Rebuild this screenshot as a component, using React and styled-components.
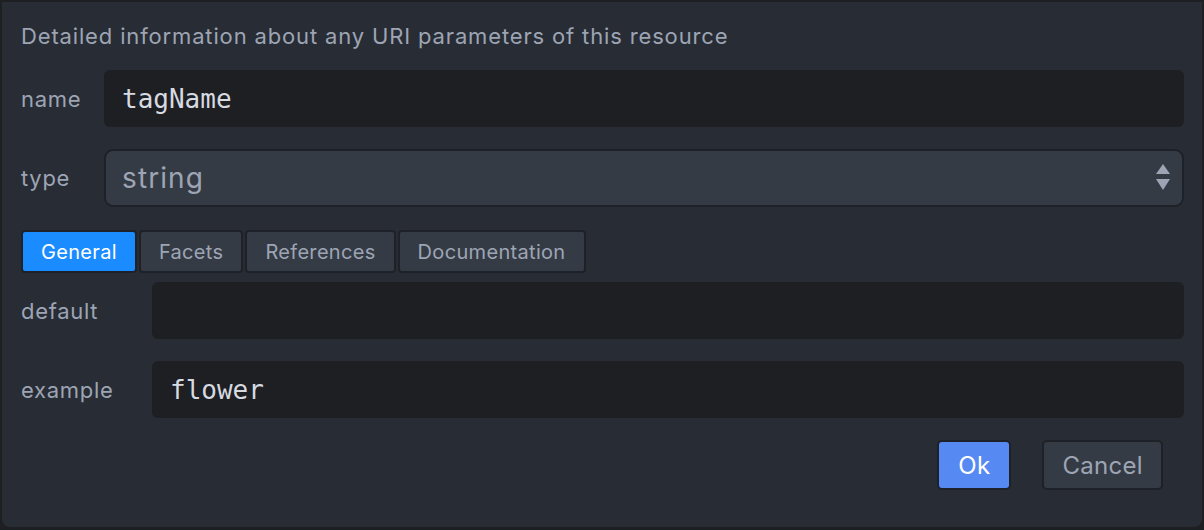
import styled, { createGlobalStyle } from "styled-components";

const GlobalStyle = createGlobalStyle`
  html, body {
    margin: 0;
    padding: 0;
    background: #1d1f23;
  }
  body {
    font-family: Inter, "Noto Sans", sans-serif;
    -webkit-font-smoothing: antialiased;
  }
`;

const Page = styled.div`
  width: 1204px;
  height: 530px;
  padding: 2px 2px 3px 2px;
  box-sizing: border-box;
  overflow: hidden;
`;

const Panel = styled.div`
  height: 100%;
  box-sizing: border-box;
  background: #282c34;
  border-radius: 0 0 8px 8px;
  padding: 19px 18px 0 19px;
  display: flex;
  flex-direction: column;
`;

const Description = styled.div`
  font-size: 22px;
  line-height: 30px;
  letter-spacing: 0.85px;
  color: #9da5b4;
  margin-bottom: 19px;
`;

const Row = styled.div`
  display: grid;
  grid-template-columns: ${(p) => p.$label}px 1fr;
  align-items: center;
  margin-bottom: ${(p) => p.$gap || 0}px;
`;

const Label = styled.div`
  font-size: 22px;
  letter-spacing: 0.7px;
  color: #9da5b4;
`;

const TextInput = styled.div`
  height: 57px;
  box-sizing: border-box;
  background: #1d1f23;
  border-radius: 6px;
  padding: 0 18px;
  display: flex;
  align-items: center;
  font-family: "DejaVu Sans Mono", monospace;
  font-size: 26px;
  color: #d7dae0;
`;

const Select = styled.div`
  height: 58px;
  box-sizing: border-box;
  background: #353b45;
  border: 2px solid #1e2127;
  border-radius: 9px;
  padding: 0 12px 0 16px;
  display: flex;
  align-items: center;
  justify-content: space-between;
  font-size: 28px;
  letter-spacing: 1.1px;
  color: #9da5b4;
`;

const Tabs = styled.div`
  display: flex;
  gap: 2px;
  margin-bottom: 9px;
`;

const Tab = styled.div`
  height: 43px;
  box-sizing: border-box;
  padding: 0 18px;
  display: flex;
  align-items: center;
  font-size: 20px;
  letter-spacing: 0.32px;
  border-radius: 4px;
  border: 2px solid #1e2127;
  background: ${(p) => (p.$active ? "#1a8cff" : "#353b45")};
  color: ${(p) => (p.$active ? "#ffffff" : "#9da5b4")};
`;

const Actions = styled.div`
  display: flex;
  justify-content: flex-end;
  gap: 31px;
  padding-right: 21px;
`;

const Button = styled.div`
  height: 50px;
  box-sizing: border-box;
  padding: 0 ${(p) => (p.$primary ? 19 : 18)}px;
  display: flex;
  align-items: center;
  font-size: 24px;
  letter-spacing: 0.3px;
  border-radius: 5px;
  border: 2px solid #1e2127;
  background: ${(p) => (p.$primary ? "#568af2" : "#353b45")};
  color: ${(p) => (p.$primary ? "#ffffff" : "#9da5b4")};
`;

const Arrows = () => (
  <svg width="14" height="28" viewBox="0 0 14 28">
    <path d="M7 0 L14 10 L0 10 Z" fill="#9da5b4" />
    <path d="M0 15 L14 15 L7 26 Z" fill="#9da5b4" />
  </svg>
);

export default function App() {
  return (
    <>
      <GlobalStyle />
      <Page>
        <Panel>
          <Description>Detailed information about any URI parameters of this resource</Description>
          <Row $label={83} $gap={22}>
            <Label>name</Label>
            <TextInput>tagName</TextInput>
          </Row>
          <Row $label={83} $gap={23}>
            <Label>type</Label>
            <Select>
              <span>string</span>
              <Arrows />
            </Select>
          </Row>
          <Tabs>
            <Tab $active>General</Tab>
            <Tab>Facets</Tab>
            <Tab>References</Tab>
            <Tab>Documentation</Tab>
          </Tabs>
          <Row $label={131} $gap={22}>
            <Label>default</Label>
            <TextInput />
          </Row>
          <Row $label={131} $gap={22}>
            <Label>example</Label>
            <TextInput>flower</TextInput>
          </Row>
          <Actions>
            <Button $primary>Ok</Button>
            <Button>Cancel</Button>
          </Actions>
        </Panel>
      </Page>
    </>
  );
}
